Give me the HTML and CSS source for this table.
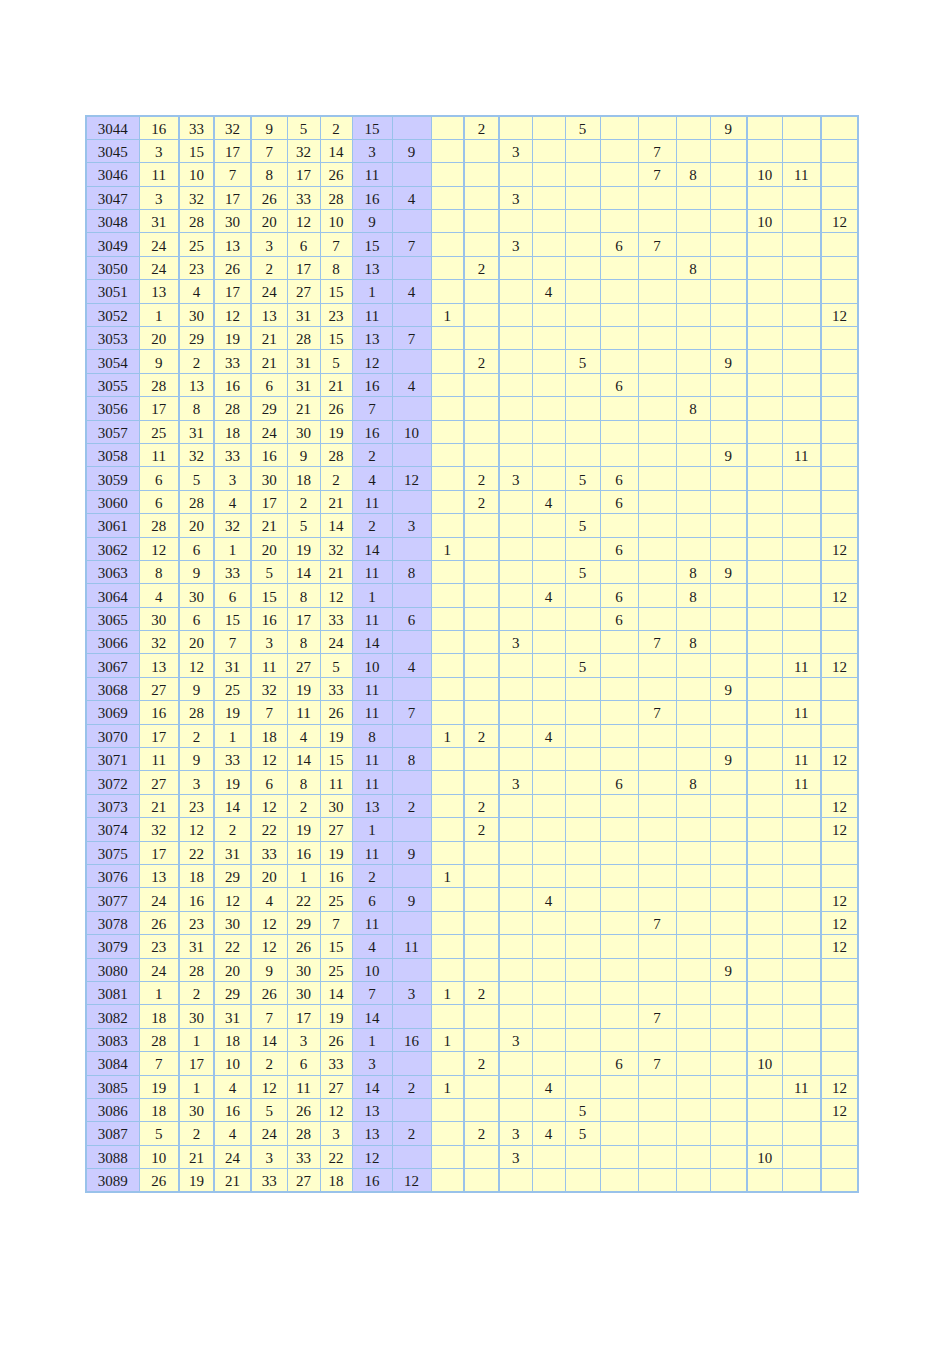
FILE: index.html
```html
<!DOCTYPE html>
<html>
<head>
<meta charset="utf-8">
<link rel="stylesheet" href="styles.css">
</head>
<body>
<table class="grid">
<colgroup>
<col class="c0"><col class="c1"><col class="c2"><col class="c3"><col class="c4"><col class="c5"><col class="c6"><col class="c7"><col class="c8">
<col class="d1"><col class="d2"><col class="d3"><col class="d4"><col class="d5"><col class="d6"><col class="d7"><col class="d8"><col class="d9"><col class="d10"><col class="d11"><col class="d12">
</colgroup>
<tbody>
<tr><td>3044</td><td>16</td><td>33</td><td>32</td><td>9</td><td>5</td><td>2</td><td>15</td><td></td><td></td><td>2</td><td></td><td></td><td>5</td><td></td><td></td><td></td><td>9</td><td></td><td></td><td></td></tr>
<tr><td>3045</td><td>3</td><td>15</td><td>17</td><td>7</td><td>32</td><td>14</td><td>3</td><td>9</td><td></td><td></td><td>3</td><td></td><td></td><td></td><td>7</td><td></td><td></td><td></td><td></td><td></td></tr>
<tr><td>3046</td><td>11</td><td>10</td><td>7</td><td>8</td><td>17</td><td>26</td><td>11</td><td></td><td></td><td></td><td></td><td></td><td></td><td></td><td>7</td><td>8</td><td></td><td>10</td><td>11</td><td></td></tr>
<tr><td>3047</td><td>3</td><td>32</td><td>17</td><td>26</td><td>33</td><td>28</td><td>16</td><td>4</td><td></td><td></td><td>3</td><td></td><td></td><td></td><td></td><td></td><td></td><td></td><td></td><td></td></tr>
<tr><td>3048</td><td>31</td><td>28</td><td>30</td><td>20</td><td>12</td><td>10</td><td>9</td><td></td><td></td><td></td><td></td><td></td><td></td><td></td><td></td><td></td><td></td><td>10</td><td></td><td>12</td></tr>
<tr><td>3049</td><td>24</td><td>25</td><td>13</td><td>3</td><td>6</td><td>7</td><td>15</td><td>7</td><td></td><td></td><td>3</td><td></td><td></td><td>6</td><td>7</td><td></td><td></td><td></td><td></td><td></td></tr>
<tr><td>3050</td><td>24</td><td>23</td><td>26</td><td>2</td><td>17</td><td>8</td><td>13</td><td></td><td></td><td>2</td><td></td><td></td><td></td><td></td><td></td><td>8</td><td></td><td></td><td></td><td></td></tr>
<tr><td>3051</td><td>13</td><td>4</td><td>17</td><td>24</td><td>27</td><td>15</td><td>1</td><td>4</td><td></td><td></td><td></td><td>4</td><td></td><td></td><td></td><td></td><td></td><td></td><td></td><td></td></tr>
<tr><td>3052</td><td>1</td><td>30</td><td>12</td><td>13</td><td>31</td><td>23</td><td>11</td><td></td><td>1</td><td></td><td></td><td></td><td></td><td></td><td></td><td></td><td></td><td></td><td></td><td>12</td></tr>
<tr><td>3053</td><td>20</td><td>29</td><td>19</td><td>21</td><td>28</td><td>15</td><td>13</td><td>7</td><td></td><td></td><td></td><td></td><td></td><td></td><td></td><td></td><td></td><td></td><td></td><td></td></tr>
<tr><td>3054</td><td>9</td><td>2</td><td>33</td><td>21</td><td>31</td><td>5</td><td>12</td><td></td><td></td><td>2</td><td></td><td></td><td>5</td><td></td><td></td><td></td><td>9</td><td></td><td></td><td></td></tr>
<tr><td>3055</td><td>28</td><td>13</td><td>16</td><td>6</td><td>31</td><td>21</td><td>16</td><td>4</td><td></td><td></td><td></td><td></td><td></td><td>6</td><td></td><td></td><td></td><td></td><td></td><td></td></tr>
<tr><td>3056</td><td>17</td><td>8</td><td>28</td><td>29</td><td>21</td><td>26</td><td>7</td><td></td><td></td><td></td><td></td><td></td><td></td><td></td><td></td><td>8</td><td></td><td></td><td></td><td></td></tr>
<tr><td>3057</td><td>25</td><td>31</td><td>18</td><td>24</td><td>30</td><td>19</td><td>16</td><td>10</td><td></td><td></td><td></td><td></td><td></td><td></td><td></td><td></td><td></td><td></td><td></td><td></td></tr>
<tr><td>3058</td><td>11</td><td>32</td><td>33</td><td>16</td><td>9</td><td>28</td><td>2</td><td></td><td></td><td></td><td></td><td></td><td></td><td></td><td></td><td></td><td>9</td><td></td><td>11</td><td></td></tr>
<tr><td>3059</td><td>6</td><td>5</td><td>3</td><td>30</td><td>18</td><td>2</td><td>4</td><td>12</td><td></td><td>2</td><td>3</td><td></td><td>5</td><td>6</td><td></td><td></td><td></td><td></td><td></td><td></td></tr>
<tr><td>3060</td><td>6</td><td>28</td><td>4</td><td>17</td><td>2</td><td>21</td><td>11</td><td></td><td></td><td>2</td><td></td><td>4</td><td></td><td>6</td><td></td><td></td><td></td><td></td><td></td><td></td></tr>
<tr><td>3061</td><td>28</td><td>20</td><td>32</td><td>21</td><td>5</td><td>14</td><td>2</td><td>3</td><td></td><td></td><td></td><td></td><td>5</td><td></td><td></td><td></td><td></td><td></td><td></td><td></td></tr>
<tr><td>3062</td><td>12</td><td>6</td><td>1</td><td>20</td><td>19</td><td>32</td><td>14</td><td></td><td>1</td><td></td><td></td><td></td><td></td><td>6</td><td></td><td></td><td></td><td></td><td></td><td>12</td></tr>
<tr><td>3063</td><td>8</td><td>9</td><td>33</td><td>5</td><td>14</td><td>21</td><td>11</td><td>8</td><td></td><td></td><td></td><td></td><td>5</td><td></td><td></td><td>8</td><td>9</td><td></td><td></td><td></td></tr>
<tr><td>3064</td><td>4</td><td>30</td><td>6</td><td>15</td><td>8</td><td>12</td><td>1</td><td></td><td></td><td></td><td></td><td>4</td><td></td><td>6</td><td></td><td>8</td><td></td><td></td><td></td><td>12</td></tr>
<tr><td>3065</td><td>30</td><td>6</td><td>15</td><td>16</td><td>17</td><td>33</td><td>11</td><td>6</td><td></td><td></td><td></td><td></td><td></td><td>6</td><td></td><td></td><td></td><td></td><td></td><td></td></tr>
<tr><td>3066</td><td>32</td><td>20</td><td>7</td><td>3</td><td>8</td><td>24</td><td>14</td><td></td><td></td><td></td><td>3</td><td></td><td></td><td></td><td>7</td><td>8</td><td></td><td></td><td></td><td></td></tr>
<tr><td>3067</td><td>13</td><td>12</td><td>31</td><td>11</td><td>27</td><td>5</td><td>10</td><td>4</td><td></td><td></td><td></td><td></td><td>5</td><td></td><td></td><td></td><td></td><td></td><td>11</td><td>12</td></tr>
<tr><td>3068</td><td>27</td><td>9</td><td>25</td><td>32</td><td>19</td><td>33</td><td>11</td><td></td><td></td><td></td><td></td><td></td><td></td><td></td><td></td><td></td><td>9</td><td></td><td></td><td></td></tr>
<tr><td>3069</td><td>16</td><td>28</td><td>19</td><td>7</td><td>11</td><td>26</td><td>11</td><td>7</td><td></td><td></td><td></td><td></td><td></td><td></td><td>7</td><td></td><td></td><td></td><td>11</td><td></td></tr>
<tr><td>3070</td><td>17</td><td>2</td><td>1</td><td>18</td><td>4</td><td>19</td><td>8</td><td></td><td>1</td><td>2</td><td></td><td>4</td><td></td><td></td><td></td><td></td><td></td><td></td><td></td><td></td></tr>
<tr><td>3071</td><td>11</td><td>9</td><td>33</td><td>12</td><td>14</td><td>15</td><td>11</td><td>8</td><td></td><td></td><td></td><td></td><td></td><td></td><td></td><td></td><td>9</td><td></td><td>11</td><td>12</td></tr>
<tr><td>3072</td><td>27</td><td>3</td><td>19</td><td>6</td><td>8</td><td>11</td><td>11</td><td></td><td></td><td></td><td>3</td><td></td><td></td><td>6</td><td></td><td>8</td><td></td><td></td><td>11</td><td></td></tr>
<tr><td>3073</td><td>21</td><td>23</td><td>14</td><td>12</td><td>2</td><td>30</td><td>13</td><td>2</td><td></td><td>2</td><td></td><td></td><td></td><td></td><td></td><td></td><td></td><td></td><td></td><td>12</td></tr>
<tr><td>3074</td><td>32</td><td>12</td><td>2</td><td>22</td><td>19</td><td>27</td><td>1</td><td></td><td></td><td>2</td><td></td><td></td><td></td><td></td><td></td><td></td><td></td><td></td><td></td><td>12</td></tr>
<tr><td>3075</td><td>17</td><td>22</td><td>31</td><td>33</td><td>16</td><td>19</td><td>11</td><td>9</td><td></td><td></td><td></td><td></td><td></td><td></td><td></td><td></td><td></td><td></td><td></td><td></td></tr>
<tr><td>3076</td><td>13</td><td>18</td><td>29</td><td>20</td><td>1</td><td>16</td><td>2</td><td></td><td>1</td><td></td><td></td><td></td><td></td><td></td><td></td><td></td><td></td><td></td><td></td><td></td></tr>
<tr><td>3077</td><td>24</td><td>16</td><td>12</td><td>4</td><td>22</td><td>25</td><td>6</td><td>9</td><td></td><td></td><td></td><td>4</td><td></td><td></td><td></td><td></td><td></td><td></td><td></td><td>12</td></tr>
<tr><td>3078</td><td>26</td><td>23</td><td>30</td><td>12</td><td>29</td><td>7</td><td>11</td><td></td><td></td><td></td><td></td><td></td><td></td><td></td><td>7</td><td></td><td></td><td></td><td></td><td>12</td></tr>
<tr><td>3079</td><td>23</td><td>31</td><td>22</td><td>12</td><td>26</td><td>15</td><td>4</td><td>11</td><td></td><td></td><td></td><td></td><td></td><td></td><td></td><td></td><td></td><td></td><td></td><td>12</td></tr>
<tr><td>3080</td><td>24</td><td>28</td><td>20</td><td>9</td><td>30</td><td>25</td><td>10</td><td></td><td></td><td></td><td></td><td></td><td></td><td></td><td></td><td></td><td>9</td><td></td><td></td><td></td></tr>
<tr><td>3081</td><td>1</td><td>2</td><td>29</td><td>26</td><td>30</td><td>14</td><td>7</td><td>3</td><td>1</td><td>2</td><td></td><td></td><td></td><td></td><td></td><td></td><td></td><td></td><td></td><td></td></tr>
<tr><td>3082</td><td>18</td><td>30</td><td>31</td><td>7</td><td>17</td><td>19</td><td>14</td><td></td><td></td><td></td><td></td><td></td><td></td><td></td><td>7</td><td></td><td></td><td></td><td></td><td></td></tr>
<tr><td>3083</td><td>28</td><td>1</td><td>18</td><td>14</td><td>3</td><td>26</td><td>1</td><td>16</td><td>1</td><td></td><td>3</td><td></td><td></td><td></td><td></td><td></td><td></td><td></td><td></td><td></td></tr>
<tr><td>3084</td><td>7</td><td>17</td><td>10</td><td>2</td><td>6</td><td>33</td><td>3</td><td></td><td></td><td>2</td><td></td><td></td><td></td><td>6</td><td>7</td><td></td><td></td><td>10</td><td></td><td></td></tr>
<tr><td>3085</td><td>19</td><td>1</td><td>4</td><td>12</td><td>11</td><td>27</td><td>14</td><td>2</td><td>1</td><td></td><td></td><td>4</td><td></td><td></td><td></td><td></td><td></td><td></td><td>11</td><td>12</td></tr>
<tr><td>3086</td><td>18</td><td>30</td><td>16</td><td>5</td><td>26</td><td>12</td><td>13</td><td></td><td></td><td></td><td></td><td></td><td>5</td><td></td><td></td><td></td><td></td><td></td><td></td><td>12</td></tr>
<tr><td>3087</td><td>5</td><td>2</td><td>4</td><td>24</td><td>28</td><td>3</td><td>13</td><td>2</td><td></td><td>2</td><td>3</td><td>4</td><td>5</td><td></td><td></td><td></td><td></td><td></td><td></td><td></td></tr>
<tr><td>3088</td><td>10</td><td>21</td><td>24</td><td>3</td><td>33</td><td>22</td><td>12</td><td></td><td></td><td></td><td>3</td><td></td><td></td><td></td><td></td><td></td><td></td><td>10</td><td></td><td></td></tr>
<tr><td>3089</td><td>26</td><td>19</td><td>21</td><td>33</td><td>27</td><td>18</td><td>16</td><td>12</td><td></td><td></td><td></td><td></td><td></td><td></td><td></td><td></td><td></td><td></td><td></td><td></td></tr>
</tbody>
</table>
</body>
</html>
```
FILE: styles.css
```css
html, body {
  margin: 0;
  padding: 0;
  background: #ffffff;
}

body {
  padding: 115px 0 0 85px;
}

.grid {
  border-collapse: collapse;
  table-layout: fixed;
  width: 772px;
  border: 2px solid #99c2ea;
  font-family: "Liberation Serif", "Times New Roman", serif;
  font-size: 15px;
  color: #1a1a1a;
}

.grid col { background: #ffffcc; }
.grid col.c0, .grid col.c7, .grid col.c8 { background: #ccccff; }

.grid col.c0 { width: 53px; }
.grid col.c1 { width: 40px; }
.grid col.c2 { width: 35px; border-left: 2px solid #99c2ea; }
.grid col.c3 { width: 37px; border-left: 2px solid #99c2ea; }
.grid col.c4 { width: 36px; border-left: 2px solid #99c2ea; }
.grid col.c5 { width: 33px; }
.grid col.c6 { width: 32px; }
.grid col.c7 { width: 40px; }
.grid col.c8 { width: 39px; }
.grid col.d1 { width: 33px; }
.grid col.d2 { width: 35px; border-left: 2px solid #99c2ea; }
.grid col.d3 { width: 33px; border-left: 2px solid #99c2ea; }
.grid col.d4 { width: 33px; }
.grid col.d5 { width: 35px; }
.grid col.d6 { width: 38px; }
.grid col.d7 { width: 38px; }
.grid col.d8 { width: 34px; }
.grid col.d9 { width: 37px; }
.grid col.d10 { width: 35px; border-left: 2px solid #99c2ea; }
.grid col.d11 { width: 39px; }
.grid col.d12 { width: 37px; border-left: 2px solid #99c2ea; }

.grid tr { height: 23.4px; }

.grid td {
  border: 1px solid #99c2ea;
  padding: 2px 0 0 0;
  text-align: center;
  vertical-align: middle;
  line-height: 16px;
  white-space: nowrap;
  overflow: hidden;
}
```
